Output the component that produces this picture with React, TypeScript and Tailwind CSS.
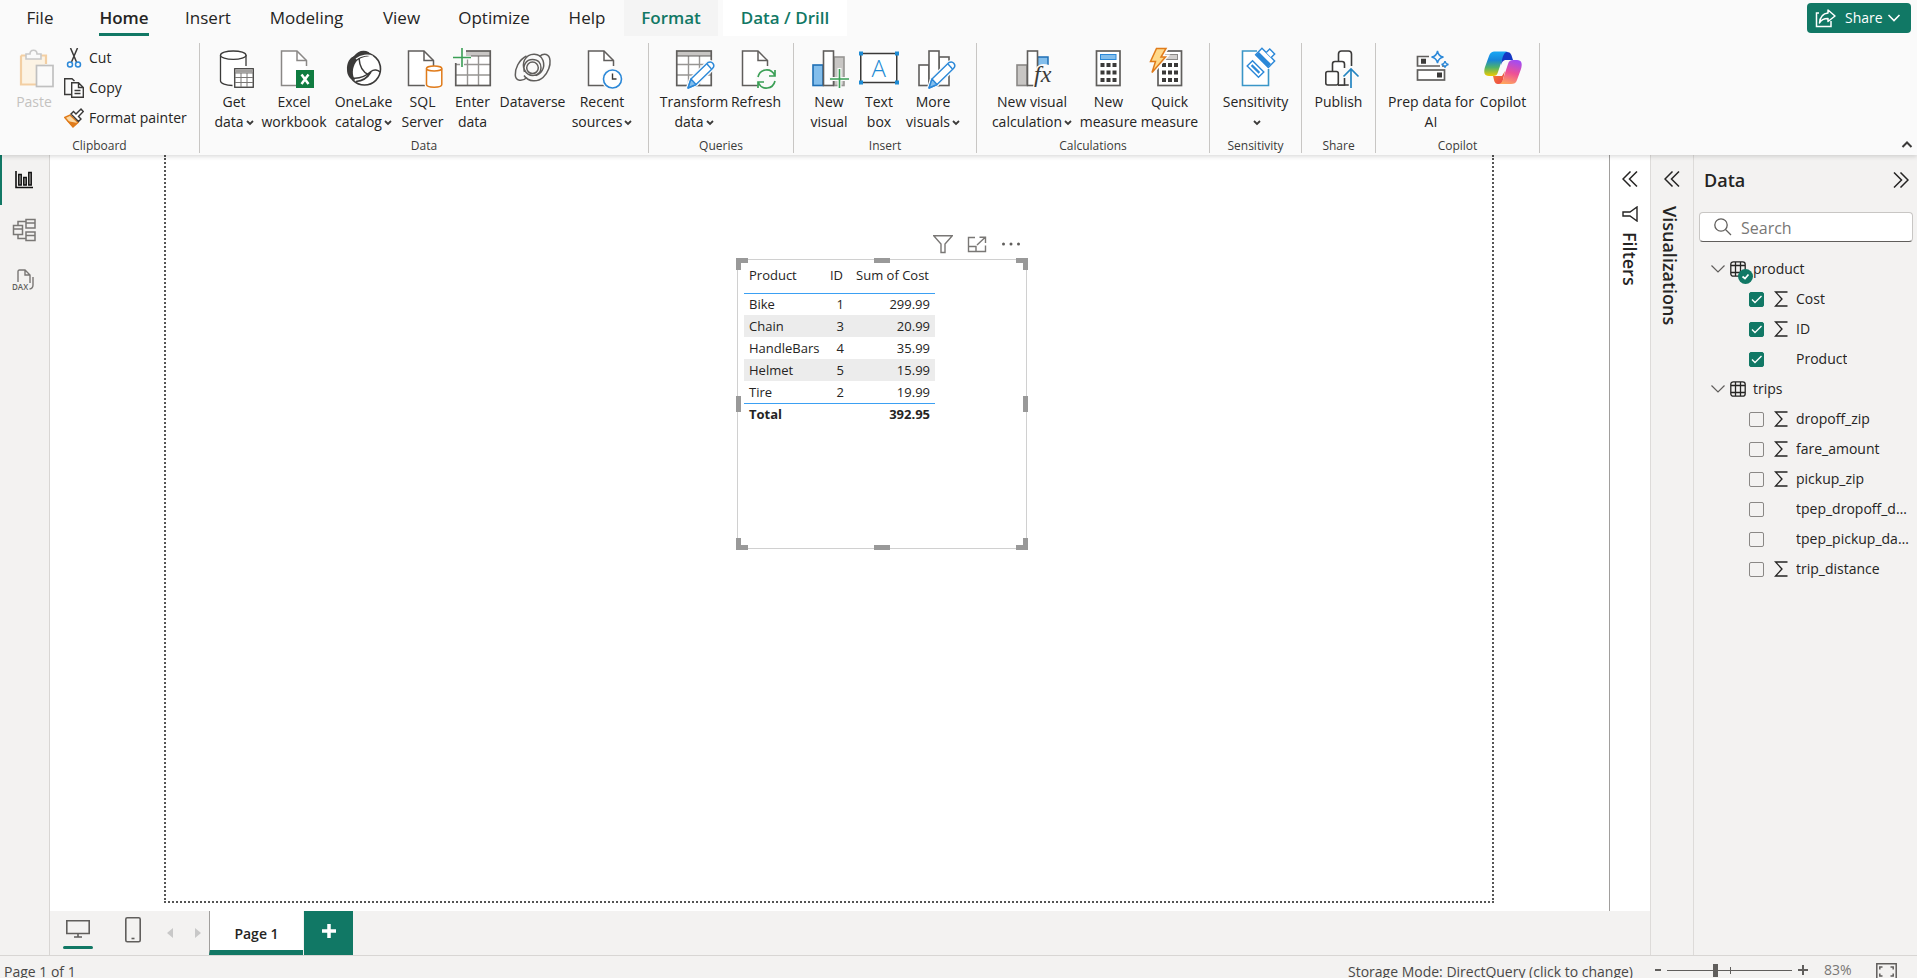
import { useState } from "react";
import type { ReactNode } from "react";

const dark = "#3b3a39";
const grey = "#605e5c";
const blue = "#2b88d8";
const green = "#3a9f55";

function Svg({ children }: { children: ReactNode }) {
  return (
    <svg width="40" height="40" viewBox="0 0 40 40" fill="none" className="overflow-visible shrink-0" aria-hidden="true">
      {children}
    </svg>
  );
}

function Doc({ x, stroke = grey }: { x: number; stroke?: string }) {
  return (
    <g transform={`translate(${x} 0)`} stroke={stroke} strokeWidth="1.5">
      <path d="M25 20V12L16 3H.5V37.5H17" fill="#fff" stroke="none" />
      <path d="M17 37.5H.5V3H16L25.5 12.5V18" />
      <path d="M16 3V12.5H25.5" />
    </g>
  );
}

function Pencil({ x }: { x: number }) {
  return (
    <g transform={`translate(${x} 0)`} stroke={blue} strokeWidth="1.4" strokeLinejoin="round">
      <path d="M0 40L3 31L20 14.5Q23 13 25 15.5T24.500 20.500L8 36.500Z" fill="#fff" stroke="#fafafa" strokeWidth="4" />
      <path d="M0 40L3 31L20 14.5Q23 13 25 15.5T24.500 20.500L8 36.500Z" fill="#fff" />
      <path d="M0 40L3 31L8 36.500Z" fill="#83beec" />
      <path d="M19 16L23.500 21" />
    </g>
  );
}

function GridTable({ x }: { x: number }) {
  return (
    <g transform={`translate(${x} 0)`}>
      <rect x=".75" y="3" width="34.500" height="34.500" fill="#fff" />
      <rect x=".75" y="3" width="34.500" height="5" fill="#c8c6c4" />
      <path d="M12.500 8V37M23.500 8V37M1 16.500H35M1 27H35" stroke="#979593" strokeWidth="1.4" />
      <path d="M1 8H35" stroke={grey} />
      <rect x=".75" y="3" width="34.500" height="34.500" stroke={grey} strokeWidth="1.7" />
    </g>
  );
}

function Bar({ x, y, fill = "#fff", stroke = grey }: { x: number; y: number; fill?: string; stroke?: string }) {
  return <rect x={x} y={y} width="10" height={37.5 - y} fill={fill} stroke={stroke} strokeWidth="1.6" />;
}

function Calculator({ x, screen, line }: { x: number; screen: string; line: string }) {
  return (
    <g transform={`translate(${x} 0)`}>
      <rect x="0" y="3" width="23.500" height="34.500" fill="#fff" stroke={grey} strokeWidth="1.7" />
      <rect x="4" y="6.500" width="15.500" height="5" fill={screen} stroke={line} />
      {[15, 22.5, 30].map((y) => (
        <path key={y} d={`M4 ${y + 2}h4M10 ${y + 2}h4M16 ${y + 2}h4`} stroke={dark} strokeWidth="4" />
      ))}
    </g>
  );
}

const icons = {
  getData: (
    <Svg>
      <path d="M6.500 7V33C6.500 36 12 37.500 19 37.500V20H32V7Z" fill="#fff" />
      <path d="M6.500 7V33C6.500 35.500 12 37.500 18.500 37.500M32 7V18" stroke={dark} strokeWidth="1.3" />
      <ellipse cx="19.250" cy="7.200" rx="12.750" ry="4.200" fill="#fff" stroke={dark} strokeWidth="1.3" />
      <rect x="20.750" y="20.750" width="18.500" height="18.500" fill="#fff" stroke={dark} strokeWidth="1.3" />
      <path d="M21 23H39" stroke="#a19f9d" strokeWidth="3" />
      <path d="M21 25H39M21 29.500H39M21 34.500H39M27 25V39M33 25V39" stroke="#797775" strokeWidth="1" />
    </Svg>
  ),
  excel: (
    <Svg>
      <Doc x={7} stroke="#8a8886" />
      <rect x="22" y="22" width="18" height="18" fill="#107c41" />
      <path d="M27.500 26.500L34.500 36M34.500 26.500L27.500 36" stroke="#fff" strokeWidth="2.500" />
    </Svg>
  ),
  oneLake: (
    <Svg>
      <circle cx="20.500" cy="21" r="16" fill="#fff" stroke={dark} strokeWidth="1.6" />
      <path d="M10 8.500C6 9 2.500 15 3 22C3 27 6 32 11 32C8 27 8 20 12 14C15 10 22 8 28 8C25 1 14 1 10 8.500Z" fill={dark} />
      <path d="M12 11C17 7 24 6 29 8.500" stroke="#fafafa" strokeWidth="1.3" />
      <path d="M15 10C15.500 18 19 24.500 25 27M8 30C16 31 22 28 27 23.500C30 21 34 22 36 24M12 33.500C19 33 24 29 27 24" stroke={dark} strokeWidth="1.5" />
    </Svg>
  ),
  sql: (
    <Svg>
      <Doc x={5} />
      <path d="M23.500 20.500V36.500C23.500 40 38.800 40 38.800 36.500V20.500Z" fill="#fff" stroke="#fafafa" strokeWidth="4" />
      <path d="M23.500 20.500V36.500C23.500 40 38.800 40 38.800 36.500V20.500" fill="#fff" stroke="#e07b1a" strokeWidth="1.5" />
      <ellipse cx="31.150" cy="20.500" rx="7.650" ry="2.500" fill="#fff" stroke="#e07b1a" strokeWidth="1.5" />
    </Svg>
  ),
  enterData: (
    <Svg>
      <GridTable x={2} />
      <path d="M0 0H13V15H0Z" fill="#fafafa" />
      <path d="M9 0V19M0 9.500H18" stroke="#fafafa" strokeWidth="4" />
      <path d="M9 0V19M0 9.500H18" stroke={green} strokeWidth="1.6" />
    </Svg>
  ),
  dataverse: (
    <Svg>
      <g stroke={grey} strokeWidth="1.5">
        <circle cx="19.500" cy="19.800" r="5.800" />
        <path d="M13.500 8C5.500 12 2 21 2.300 27C2.500 33 9 34 14 29.500" />
        <path d="M11.500 24C9.500 17.500 13 11.500 19.500 11.500C25.500 11.500 28 15.500 28 20C28 24 24.500 27.500 20 27.500C12 27.500 8.500 18.500 11.500 12C16 4 27 4.500 30 12.500C32.500 20 28 26 23 27.500" />
        <path d="M11 27.500C15.500 34.500 25 34 30 29.500C35.500 24.500 37.500 17 37 12.500C36.500 6 31 4.500 26.500 8.500" />
      </g>
    </Svg>
  ),
  recent: (
    <Svg>
      <Doc x={6} />
      <circle cx="30.500" cy="31" r="11" fill="#fafafa" />
      <circle cx="30.500" cy="31" r="9" fill="#fff" stroke={blue} strokeWidth="1.6" />
      <path d="M30.500 25.500V31H34.500" stroke={dark} strokeWidth="1.4" />
    </Svg>
  ),
  transform: (
    <Svg>
      <GridTable x={2} />
      <Pencil x={14} />
    </Svg>
  ),
  refresh: (
    <Svg>
      <Doc x={6} />
      <circle cx="30.500" cy="31" r="11" fill="#fafafa" />
      <path d="M22 29C24 20.500 35 19.500 38.500 27M39 22V28H33M39 33C37 41.500 26 42.500 22.500 35M22 40V34H28" stroke={green} strokeWidth="1.7" />
    </Svg>
  ),
  newVisual: (
    <Svg>
      <Bar x={4} y={17} fill="#83beec" stroke="#1f6fb5" />
      <Bar x={25} y={9} fill="#c8c6c4" stroke="#979593" />
      <Bar x={14.5} y={3} />
      <path d="M30.500 20V41M20 31H40" stroke="#fafafa" strokeWidth="4" />
      <path d="M30.500 21V40M21 31H40" stroke={green} strokeWidth="1.6" />
    </Svg>
  ),
  textBox: (
    <Svg>
      <rect x="1.750" y="5.500" width="36" height="29" fill="#fff" stroke={dark} strokeWidth="1.5" />
      <path d="M0 5.500h4M36 5.500h4M0 34.500h4M36 34.500h4" stroke="#1e8bd4" strokeWidth="4" />
      <text x="19.750" y="29" fontSize="24" textAnchor="middle" fill="#1e8bd4" fontFamily="Open Sans, sans-serif" fontWeight="300">A</text>
    </Svg>
  ),
  moreVisuals: (
    <Svg>
      <Bar x={6} y={17} />
      <Bar x={26} y={9} />
      <Bar x={16} y={3} />
      <Pencil x={16} />
    </Svg>
  ),
  visualCalc: (
    <Svg>
      <Bar x={5} y={17} fill="#c8c6c4" stroke="#8a8886" />
      <rect x="25.500" y="9" width="10.500" height="15" fill="#83beec" stroke="#1f6fb5" strokeWidth="1.5" />
      <Bar x={15.5} y={3} />
      <path d="M24 20Q28 14 37 17L40 39H21Z" fill="#fafafa" />
      <text x="22" y="34" fontSize="24" fontStyle="italic" fill={dark} fontFamily="Liberation Serif, serif">fx</text>
    </Svg>
  ),
  measure: (
    <Svg>
      <Calculator x={7.5} screen="#83beec" line={blue} />
    </Svg>
  ),
  quickMeasure: (
    <Svg>
      <Calculator x={8} screen="#d2d0ce" line="#8a8886" />
      <path d="M7 0L17 0L11 8.500H16L2 25L6 14H0Z" fill="#fde07e" stroke="#fafafa" strokeWidth="4" />
      <path d="M6.500 .5H16L11 9H15.500L2 24.500L5.500 13.500H.5Z" fill="#ffd98a" stroke="#e07b1a" strokeWidth="1.5" />
    </Svg>
  ),
  sensitivity: (
    <Svg>
      <path d="M21 3H6.500V37.500H32.500V21" fill="#fff" stroke="#3a96c8" strokeWidth="1.6" />
      <g transform="translate(19.500 21) rotate(45)" stroke={blue} strokeWidth="1.4">
        <rect x="-8" y="-3.800" width="16" height="7.600" fill="#fff" />
        <path d="M-5.500 0H5.500" strokeWidth="2.200" />
      </g>
      <g transform="translate(29.500 9.500) rotate(45)" stroke={blue} strokeWidth="1.4">
        <rect x="-9" y="-4" width="18" height="9" fill="#fff" />
        <path d="M-8.500 3H8.500" strokeWidth="4.500" />
        <path d="M-3 -4V-9H4V-4" fill="#fff" />
      </g>
    </Svg>
  ),
  publish: (
    <Svg>
      <g stroke={dark} strokeWidth="1.6" fill="#fff">
        <path d="M19.500 13V6Q19.500 3 22.500 3H29.500Q32.500 3 32.500 6V18M32 37H19" />
        <path d="M13.500 23V16Q13.500 13.500 16 13.500H23Q25.500 13.500 25.500 16V20M25.500 30V37H19" />
        <rect x="6.800" y="23.500" width="12.500" height="13.500" rx="2" />
      </g>
      <path d="M32 40V21M24.500 28.500L32 21L39.500 28.500" stroke="#fafafa" strokeWidth="4.500" />
      <path d="M32 40V21M24.500 28.500L32 21L39.500 28.500" stroke="#2484c0" strokeWidth="1.7" />
    </Svg>
  ),
  prepData: (
    <Svg>
      <g stroke={grey} strokeWidth="1.7">
        <path d="M18 8.500H6.500V18H29M31 18H33" />
        <rect x="6.500" y="22" width="27" height="10" fill="#fff" />
      </g>
      <path d="M10 13.200H15M26 27H31" stroke={dark} strokeWidth="5" />
      <path d="M26.500 3Q27.500 8.500 32.500 9Q27.500 10 26.500 15Q25.500 10 20.500 9Q25.500 8.500 26.500 3ZM34 13Q34.500 16 37.500 16.500Q34.500 17 34 19.500Q33.500 17 30.500 16.500Q33.500 16 34 13Z" fill="#fafafa" stroke={blue} strokeWidth="1.4" />
    </Svg>
  ),
  copilot: (
    <Svg>
      <defs>
        <linearGradient id="cpLeft" x1="0" y1="0" x2="0" y2="1">
          <stop offset="0" stopColor="#18a8f5" />
          <stop offset=".35" stopColor="#1785d9" />
          <stop offset=".65" stopColor="#4fb26b" />
          <stop offset="1" stopColor="#f0cb00" />
        </linearGradient>
        <linearGradient id="cpRight" x1=".6" y1="0" x2=".3" y2="1">
          <stop offset="0" stopColor="#a44cf0" />
          <stop offset=".5" stopColor="#ee5096" />
          <stop offset="1" stopColor="#ffa65c" />
        </linearGradient>
        <linearGradient id="cpBottom" x1="0" y1="0" x2="1" y2="1">
          <stop offset="0" stopColor="#f7862e" />
          <stop offset="1" stopColor="#e83c4c" />
        </linearGradient>
      </defs>
      <path d="M19 4H24C28 4 28.500 7 30 12H22Q19 13 18 17Z" fill="#1437c4" />
      <path d="M10 28H19L22 23L19 36H15C11 36 11 31 10 28Z" fill="url(#cpBottom)" />
      <path d="M12 3.500H25C21 4 20 8 19 12L15 24C14 27 13 28 10 28H6C1 28 .5 24 2 19L6 8C7.500 4.500 9 3.500 12 3.500Z" fill="url(#cpLeft)" />
      <path d="M28 36H15C19 36 20 32 21 28L25 16C26 13 27 12 30 12H34C39 12 39.500 16 38 21L34 32C33 35 31 36 28 36Z" fill="url(#cpRight)" />
    </Svg>
  ),
};

function Caret() {
  return (
    <svg width="8" height="6" viewBox="0 0 8 6" fill="none" className="inline-block ml-0.5" aria-hidden="true">
      <path d="M1 1l3 3 3-3" stroke={dark} strokeWidth="1.8" />
    </svg>
  );
}

type Command = { icon: keyof typeof icons; lines: string[]; width: string; menu?: boolean };

const groups: { label: string; width: string; pad: string; items: Command[] }[] = [
  {
    label: "Data",
    width: "w-[449px]",
    pad: "pl-[7px]",
    items: [
      { icon: "getData", lines: ["Get", "data"], width: "w-[54px]", menu: true },
      { icon: "excel", lines: ["Excel", "workbook"], width: "w-[66px]" },
      { icon: "oneLake", lines: ["OneLake", "catalog"], width: "w-[73px]", menu: true },
      { icon: "sql", lines: ["SQL", "Server"], width: "w-[45px]" },
      { icon: "enterData", lines: ["Enter", "data"], width: "w-[55px]" },
      { icon: "dataverse", lines: ["Dataverse"], width: "w-[65px]" },
      { icon: "recent", lines: ["Recent", "sources"], width: "w-[74px]", menu: true },
    ],
  },
  {
    label: "Queries",
    width: "w-[145px]",
    pad: "pl-[7px]",
    items: [
      { icon: "transform", lines: ["Transform", "data"], width: "w-[76px]", menu: true },
      { icon: "refresh", lines: ["Refresh"], width: "w-12" },
    ],
  },
  {
    label: "Insert",
    width: "w-[183px]",
    pad: "pl-3",
    items: [
      { icon: "newVisual", lines: ["New", "visual"], width: "w-[46px]" },
      { icon: "textBox", lines: ["Text", "box"], width: "w-[54px]" },
      { icon: "moreVisuals", lines: ["More", "visuals"], width: "w-[54px]", menu: true },
    ],
  },
  {
    label: "Calculations",
    width: "w-[233px]",
    pad: "pl-[9px]",
    items: [
      { icon: "visualCalc", lines: ["New visual", "calculation"], width: "w-[92px]", menu: true },
      { icon: "measure", lines: ["New", "measure"], width: "w-[61px]" },
      { icon: "quickMeasure", lines: ["Quick", "measure"], width: "w-[61px]" },
    ],
  },
  {
    label: "Sensitivity",
    width: "w-[92px]",
    pad: "",
    items: [{ icon: "sensitivity", lines: ["Sensitivity", ""], width: "w-full", menu: true }],
  },
  {
    label: "Share",
    width: "w-[74px]",
    pad: "",
    items: [{ icon: "publish", lines: ["Publish"], width: "w-full" }],
  },
  {
    label: "Copilot",
    width: "w-[164px]",
    pad: "pl-[11px]",
    items: [
      { icon: "prepData", lines: ["Prep data for", "AI"], width: "w-[88px]" },
      { icon: "copilot", lines: ["Copilot"], width: "w-14" },
    ],
  },
];

const tabs = [
  { name: "File", className: "w-20" },
  { name: "Home", className: "w-[88px] font-semibold" },
  { name: "Insert", className: "w-20" },
  { name: "Modeling", className: "w-[117px]" },
  { name: "View", className: "w-[73px]" },
  { name: "Optimize", className: "w-28" },
  { name: "Help", className: "w-[74px]" },
  { name: "Format", className: "w-[94px] bg-[#f4f4f4] text-[#117865] font-semibold" },
  { name: "Data / Drill", className: "w-[124px] ml-[5px] bg-white text-[#117865] font-semibold" },
];

function Header() {
  return (
    <header className="relative z-10 bg-[#fafafa] shadow-[0_1px_5px_rgba(0,0,0,0.18)] shrink-0">
      <div className="flex justify-between">
        <nav className="flex">
          {tabs.map((tab) => (
            <button key={tab.name} className={`h-9 flex flex-col items-center text-[17px] leading-9 whitespace-nowrap ${tab.className}`}>
              <span className={tab.name === "Home" ? "h-9 border-b-[3px] border-[#117865]" : "h-9"}>{tab.name}</span>
            </button>
          ))}
        </nav>
        <button className="flex items-center h-[30px] w-[104px] mt-[3px] mr-1.5 pl-2 rounded bg-[#117865] text-white text-sm">
          <svg width="22" height="20" viewBox="0 0 22 20" fill="none" stroke="#fff" strokeWidth="1.5" aria-hidden="true">
            <path d="M4 5H1.500V18.500H16V13" />
            <path d="M13 2L20 8L13 13.500V10.500C9 10.500 6 12 4.500 15C5 9 8 5.500 13 5Z" strokeLinejoin="round" />
          </svg>
          <span className="ml-2">Share</span>
          <svg width="14" height="8" viewBox="0 0 14 8" fill="none" className="ml-1" aria-hidden="true">
            <path d="M1.500 1L7 6.500L12.500 1" stroke="#fff" strokeWidth="1.6" />
          </svg>
        </button>
      </div>

      <div className="flex h-[119px] text-sm leading-5 text-[#252423]">
        <div className="flex flex-col w-[200px] mt-[7px] mb-0.5 border-r border-[#c8c6c4] shrink-0">
          <div className="flex pl-2.5 h-24 shrink-0">
            <button disabled className="flex flex-col items-center w-12 pt-[5px] text-[#c4c2c0]">
              <svg width="40" height="40" viewBox="0 0 40 40" fill="none" aria-hidden="true">
                <path d="M8 8H31V17H22V36H8Z" fill="#fcf3e4" />
                <path d="M7 7.500V36.500H22M7 7.500H12M27 7.500H32V16" stroke="#f3cfa3" strokeWidth="2.200" />
                <path d="M12 11V6H16C16 1 23 1 23 6H27V11Z" fill="#fafafa" stroke="#c8c8c8" strokeWidth="1.6" />
                <rect x="22.500" y="17.500" width="16.500" height="21" fill="#fafafa" stroke="#c0c0c0" strokeWidth="1.7" />
              </svg>
              <span className="mt-1">Paste</span>
            </button>
            <div className="flex flex-col ml-1.5">
              <button className="flex items-center gap-[5px] h-[30px] whitespace-nowrap">
                <svg width="20" height="20" viewBox="0 0 20 20" fill="none" strokeWidth="1.5" aria-hidden="true">
                  <path d="M6.500 0L12.500 14M13.500 0L7.500 14" stroke={dark} />
                  <circle cx="6" cy="16.500" r="2.500" stroke={blue} />
                  <circle cx="14" cy="16.500" r="2.500" stroke={blue} />
                </svg>
                Cut
              </button>
              <button className="flex items-center gap-[5px] h-[30px] whitespace-nowrap">
                <svg width="20" height="20" viewBox="0 0 20 20" fill="none" stroke={dark} strokeWidth="1.4" aria-hidden="true">
                  <path d="M7 16.500H.7V.7H8L10.500 3" />
                  <path d="M7.700 4.700H14.500L19.300 9.500V19.300H7.700ZM14.500 5V9.500H19M10.500 12.500H16.500M10.500 15.500H16.500" fill="#fff" />
                </svg>
                Copy
              </button>
              <button className="flex items-center gap-[5px] h-[30px] whitespace-nowrap">
                <svg width="20" height="20" viewBox="0 0 20 20" fill="none" strokeWidth="1.4" aria-hidden="true">
                  <path d="M.8 9.500L6 7L14 14.500L9 19Z" fill="#fbd9a5" stroke="#e07b1a" />
                  <path d="M3 13L13.500 15L9 19Z" fill="#e07b1a" />
                  <path d="M7 6L9.500 3.500L12 6L17 1L19.300 3.500L14.500 8.500L17 11L14.500 13.500Z" fill="#fff" stroke={dark} />
                </svg>
                Format painter
              </button>
            </div>
          </div>
          <div className="text-xs leading-[14px] text-center text-[#3b3a39]">Clipboard</div>
        </div>

        {groups.map((group) => (
          <div key={group.label} className={`flex flex-col mt-[7px] mb-0.5 border-r border-[#c8c6c4] shrink-0 ${group.width}`}>
            <div className={`flex h-24 shrink-0 pt-[5px] items-start ${group.pad}`}>
              {group.items.map((item) => (
                <button key={item.icon} className={`flex flex-col items-center shrink-0 whitespace-nowrap ${item.width}`}>
                  {icons[item.icon]}
                  {item.lines.map((line, i) => (
                    <span key={i} className={i === 0 ? "mt-1" : ""}>
                      {line}
                      {item.menu && i === 1 && <Caret />}
                    </span>
                  ))}
                </button>
              ))}
            </div>
            <div className="text-xs leading-[14px] text-center text-[#3b3a39]">{group.label}</div>
          </div>
        ))}
        <button aria-label="Collapse ribbon" className="ml-auto self-end mr-1 mb-1.5">
          <svg width="12" height="9" viewBox="0 0 12 9" fill="none" aria-hidden="true">
            <path d="M1.500 7L6 2.500L10.500 7" stroke={dark} strokeWidth="2" />
          </svg>
        </button>
      </div>
    </header>
  );
}

function ViewRail() {
  return (
    <nav className="w-[50px] shrink-0 bg-[#f3f2f1] border-r border-[#d8d6d4]">
      <button aria-label="Report view" className="flex items-center w-full h-[50px] pl-[13px] border-l-2 border-[#117865]">
        <svg width="18" height="18" viewBox="0 0 18 18" fill="none" aria-hidden="true">
          <path d="M1 0V16.500H18" stroke="#111" strokeWidth="1.600" />
          <path d="M3.700 3.500h2.600v10.500h-2.600zM8.700 6.500h2.600v7.500h-2.600zM13.700 1.500h2.600v12.500h-2.600z" fill="#979593" stroke="#111" strokeWidth="1.300" />
        </svg>
      </button>
      <button aria-label="Model view" className="flex items-center w-full h-[50px] pl-3">
        <svg width="25" height="24" viewBox="0 0 25 24" fill="none" stroke="#797775" strokeWidth="1.500" aria-hidden="true">
          <path d="M1.500 7.500h9v9h-9zM1.500 11h9M14 1.500h9v8.500h-9zM14 5h9M14 14h9v8.500h-9zM14 17.500h9M6 7V3.500H14M6 17V20.500H14" />
        </svg>
      </button>
      <button aria-label="DAX query view" className="flex items-center w-full h-[50px] pl-3">
        <svg width="23" height="22" viewBox="0 0 23 22" fill="none" stroke="#797775" strokeWidth="1.400" aria-hidden="true">
          <path d="M6 13V2.500Q6 1 7.500 1H13L18 6V14M13 1V6H18M21 8V16Q21 19.500 17.500 20" />
          <text x="0" y="20.500" fontSize="8" stroke="none" fill="#605e5c" fontWeight="600" fontFamily="Open Sans, sans-serif">DAX</text>
        </svg>
      </button>
    </nav>
  );
}

const rows = [
  { product: "Bike", id: 1, cost: "299.99" },
  { product: "Chain", id: 3, cost: "20.99" },
  { product: "HandleBars", id: 4, cost: "35.99" },
  { product: "Helmet", id: 5, cost: "15.99" },
  { product: "Tire", id: 2, cost: "19.99" },
];

const corners = [
  "-left-0.5 -top-0.5 border-l-[5px] border-t-[5px]",
  "-right-0.5 -top-0.5 border-r-[5px] border-t-[5px]",
  "-left-0.5 -bottom-0.5 border-l-[5px] border-b-[5px]",
  "-right-0.5 -bottom-0.5 border-r-[5px] border-b-[5px]",
];

const edges = [
  "left-1/2 -ml-2 -top-0.5 w-4 h-[5px]",
  "left-1/2 -ml-2 -bottom-0.5 w-4 h-[5px]",
  "top-1/2 -mt-2 -left-0.5 w-[5px] h-4",
  "top-1/2 -mt-2 -right-0.5 w-[5px] h-4",
];

function TableVisual() {
  return (
    <div className="absolute left-[571px] top-[104px] w-[290px] h-[290px] border border-[#d0d0d0]">
      <div className="absolute right-[5px] bottom-full flex items-center gap-3.5 mb-1.5">
        <button aria-label="Filters on visual" className="flex">
          <svg width="20" height="20" viewBox="0 0 20 20" fill="none" stroke="#797775" strokeWidth="1.400" aria-hidden="true">
            <path d="M.7 1.700H19.300L12 10V18.500H8V10Z" />
          </svg>
        </button>
        <button aria-label="Focus mode" className="flex">
          <svg width="20" height="20" viewBox="0 0 20 20" fill="none" stroke="#797775" strokeWidth="1.400" aria-hidden="true">
            <path d="M8 3.500H1.500V17.500H18.500V11.500M1.500 12.500H9V17.500M10 11L18 3.500M12.500 3.200H18.500V9" />
          </svg>
        </button>
        <button aria-label="More options" className="flex">
          <svg width="20" height="20" viewBox="0 0 20 20" fill="#605e5c" aria-hidden="true">
            <circle cx="2.500" cy="10" r="1.500" />
            <circle cx="10" cy="10" r="1.500" />
            <circle cx="17.500" cy="10" r="1.500" />
          </svg>
        </button>
      </div>

      {corners.map((c) => (
        <span key={c} className={`absolute w-3 h-3 border-[#999] ${c}`} />
      ))}
      {edges.map((c) => (
        <span key={c} className={`absolute bg-[#999] ${c}`} />
      ))}

      <table className="mt-[5px] ml-1.5 w-[191px] table-fixed border-collapse text-[13px] leading-5 text-[#252423] whitespace-nowrap">
        <colgroup>
          <col className="w-20" />
          <col className="w-[25px]" />
          <col />
        </colgroup>
        <thead>
          <tr className="h-7 border-b border-[#3ba0f3] align-top">
            <th scope="col" className="font-normal text-left pl-[5px]">Product</th>
            <th scope="col" className="font-normal text-center">ID</th>
            <th scope="col" className="font-normal text-right pr-1.5">Sum of Cost</th>
          </tr>
        </thead>
        <tbody>
          {rows.map((row, i) => (
            <tr key={row.product} className={i % 2 ? "h-[22px] bg-[#ececec]" : "h-[22px]"}>
              <td className="pl-[5px]">{row.product}</td>
              <td className="text-right pr-[5px]">{row.id}</td>
              <td className="text-right pr-[5px]">{row.cost}</td>
            </tr>
          ))}
        </tbody>
        <tfoot>
          <tr className="h-[22px] border-t border-[#3ba0f3] font-bold">
            <td className="pl-[5px]">Total</td>
            <td />
            <td className="text-right pr-[5px]">392.95</td>
          </tr>
        </tfoot>
      </table>
    </div>
  );
}

function DoubleChevron({ right }: { right?: boolean }) {
  return (
    <svg width="16" height="16" viewBox="0 0 16 16" fill="none" stroke="#252423" strokeWidth="1.500" aria-hidden="true">
      <path d={right ? "M1 .5L8.500 8L1 15.500M7.500 .5L15 8L7.500 15.500" : "M8.500 .5L1 8L8.500 15.500M15 .5L7.500 8L15 15.500"} />
    </svg>
  );
}

function PageBar() {
  return (
    <div className="flex h-11 shrink-0 bg-[#f3f2f1]">
      <button aria-label="Desktop layout" className="flex flex-col items-center w-[30px] ml-[13px] mt-[9px]">
        <svg width="24" height="18" viewBox="0 0 24 18" fill="none" stroke={grey} strokeWidth="1.600" aria-hidden="true">
          <path d="M.8 .8H23.200V13.500H.8ZM12 13.500V17M8 17H16" />
        </svg>
        <span className="w-full h-[3px] mt-2 rounded-full bg-[#117865]" />
      </button>
      <button aria-label="Mobile layout" className="ml-8 mb-[7px]">
        <svg width="16" height="26" viewBox="0 0 16 26" fill="none" stroke={grey} strokeWidth="1.600" aria-hidden="true">
          <rect x=".8" y=".8" width="14.400" height="24" rx="1.500" />
          <path d="M6.500 21.500H9.500" />
        </svg>
      </button>
      <button disabled aria-label="Previous page" className="ml-[26px]">
        <svg width="6" height="12" viewBox="0 0 6 12" fill="#c8c8c8" aria-hidden="true">
          <path d="M6 1V11L0 6Z" />
        </svg>
      </button>
      <button disabled aria-label="Next page" className="ml-[22px]">
        <svg width="6" height="12" viewBox="0 0 6 12" fill="#c8c8c8" aria-hidden="true">
          <path d="M0 1V11L6 6Z" />
        </svg>
      </button>
      <button className="ml-2 w-[94px] pt-1.5 bg-white border-l border-l-[#a19f9d] border-b-[5px] border-b-[#117865] text-sm font-semibold text-[#252423]">
        Page 1
      </button>
      <button aria-label="New page" className="flex items-center justify-center w-[49px] ml-px pb-1 bg-[#117865]">
        <svg width="14" height="14" viewBox="0 0 14 14" fill="none" stroke="#fff" strokeWidth="3.500" aria-hidden="true">
          <path d="M7 0V14M0 7H14" />
        </svg>
      </button>
    </div>
  );
}

function TableIcon({ used }: { used: boolean }) {
  return (
    <span className="relative">
      <svg width="16" height="16" viewBox="0 0 16 16" fill="none" stroke="#252423" strokeWidth="1.300" aria-hidden="true">
        <rect x=".8" y=".8" width="14.400" height="14.400" rx="2.500" />
        <path d="M5.500 1V15M10.500 1V15M1 4.500H15M1 11.500H15" />
      </svg>
      {used && (
        <svg width="15" height="15" viewBox="0 0 15 15" fill="none" className="absolute left-2 top-2" aria-hidden="true">
          <circle cx="7.500" cy="7.500" r="7.500" fill="#117865" />
          <path d="M4.500 7.500L7 9.500L10.500 5.500" stroke="#fff" strokeWidth="1.700" />
        </svg>
      )}
    </span>
  );
}

const tables = [
  {
    name: "product",
    used: true,
    fields: [
      { name: "Cost", sum: true, checked: true },
      { name: "ID", sum: true, checked: true },
      { name: "Product", sum: false, checked: true },
    ],
  },
  {
    name: "trips",
    used: false,
    fields: [
      { name: "dropoff_zip", sum: true, checked: false },
      { name: "fare_amount", sum: true, checked: false },
      { name: "pickup_zip", sum: true, checked: false },
      { name: "tpep_dropoff_datetime", sum: false, checked: false },
      { name: "tpep_pickup_datetime", sum: false, checked: false },
      { name: "trip_distance", sum: true, checked: false },
    ],
  },
];

function DataPane() {
  return (
    <aside className="w-[223px] shrink-0 bg-[#f3f2f1] text-[#252423]">
      <div className="flex items-center justify-between h-[57px] pl-2.5 pr-2 pb-2">
        <h2 className="text-lg font-semibold">Data</h2>
        <button aria-label="Collapse data pane">
          <DoubleChevron right />
        </button>
      </div>
      <div className="flex items-center h-[30px] ml-[5px] mr-1 pl-3.5 rounded bg-white border border-[#c8c6c4] border-b-[#605e5c]">
        <svg width="18" height="18" viewBox="0 0 18 18" fill="none" stroke={grey} strokeWidth="1.300" className="shrink-0" aria-hidden="true">
          <circle cx="7" cy="7" r="6.200" />
          <path d="M11.500 11.500L17 17" />
        </svg>
        <input aria-label="Search" placeholder="Search" className="ml-[9px] pt-0.5 w-full min-w-0 text-base outline-none placeholder:text-[#797775]" />
      </div>
      <div className="mt-3 text-sm">
        {tables.map((table) => (
          <div key={table.name}>
            <button className="flex items-center w-full h-[30px] pl-[17px]">
              <svg width="14" height="8" viewBox="0 0 14 8" fill="none" stroke={grey} strokeWidth="1.200" aria-hidden="true">
                <path d="M.5 .5L7 7L13.500 .5" />
              </svg>
              <span className="flex ml-[5px]"><TableIcon used={table.used} /></span>
              <span className="ml-[7px]">{table.name}</span>
            </button>
            {table.fields.map((field) => (
              <label key={field.name} className="flex items-center h-[30px] pl-[55px] pr-1.5">
                <span className="relative flex shrink-0">
                  <input
                    type="checkbox"
                    defaultChecked={field.checked}
                    className="peer appearance-none w-[15px] h-[15px] rounded-xs border border-[#8a8886] checked:bg-[#117865] checked:border-[#117865]"
                  />
                  <svg width="15" height="15" viewBox="0 0 15 15" fill="none" className="absolute inset-0 hidden peer-checked:block pointer-events-none" aria-hidden="true">
                    <path d="M3 7.500L6 10.500L12.500 4" stroke="#fff" strokeWidth="1.400" />
                  </svg>
                </span>
                <span className="w-8 pl-2.5 shrink-0">
                  {field.sum && (
                    <svg width="14" height="16" viewBox="0 0 14 16" fill="none" stroke="#252423" strokeWidth="1.300" aria-hidden="true">
                      <path d="M13.500 1H1.500L8 8L1.500 15H13.500" />
                    </svg>
                  )}
                </span>
                <span className="truncate">{field.name}</span>
              </label>
            ))}
          </div>
        ))}
      </div>
    </aside>
  );
}

function StatusBar() {
  const [zoom, setZoom] = useState(83);

  return (
    <footer className="flex items-start h-[23px] shrink-0 overflow-hidden bg-[#f3f2f1] border-t border-[#d8d6d4] text-sm text-[#494847] whitespace-nowrap">
      <span className="mt-1.5 ml-1">Page 1 of 1</span>
      <button className="mt-1.5 ml-auto">Storage Mode: DirectQuery (click to change)</button>
      <button aria-label="Zoom out" className="flex items-center h-7 ml-[22px]">
        <svg width="6" height="12" viewBox="0 0 6 12" aria-hidden="true">
          <path d="M0 6H6" stroke={grey} strokeWidth="2" />
        </svg>
      </button>
      <div className="relative flex items-center h-7 w-[125px] ml-1.5">
        <input
          type="range"
          aria-label="Zoom level"
          min={10}
          max={200}
          value={zoom}
          onChange={(e) => setZoom(Number(e.target.value))}
          className="w-full h-px appearance-none bg-[#605e5c] [&::-webkit-slider-thumb]:appearance-none [&::-webkit-slider-thumb]:w-[5px] [&::-webkit-slider-thumb]:h-[13px] [&::-webkit-slider-thumb]:bg-[#605e5c]"
        />
        <span className="absolute left-1/2 top-[11px] w-px h-[7px] bg-[#605e5c]" />
      </div>
      <button aria-label="Zoom in" className="flex items-center h-7 ml-1.5">
        <svg width="10" height="10" viewBox="0 0 10 10" aria-hidden="true">
          <path d="M0 5H10M5 0V10" stroke={grey} strokeWidth="2" />
        </svg>
      </button>
      <span className="w-[52px] h-7 ml-4 leading-7 text-[#797775]">{zoom}%</span>
      <button aria-label="Fit to page" className="mt-[7px] mr-5">
        <svg width="21" height="17" viewBox="0 0 21 17" fill="none" stroke={grey} strokeWidth="1.500" aria-hidden="true">
          <path d="M.8 .8H20.200V16.200H.8ZM6.500 4H3.800V6.500M14.500 4H17.200V6.500M6.500 13H3.800V10.500M14.500 13H17.200V10.500" />
        </svg>
      </button>
    </footer>
  );
}

export default function App() {
  return (
    <div className="flex flex-col h-screen overflow-hidden bg-white text-[#252423] font-['Open_Sans','Noto_Sans',sans-serif]">
      <Header />
      <div className="flex flex-1 min-h-0">
        <ViewRail />
        <div className="flex flex-col flex-1 min-w-0">
          <div className="flex flex-1 min-h-0">
            <main className="flex flex-1 min-w-0 pl-[114px] pr-[115px] pb-2 bg-white">
              <div className="relative flex-1 border-2 border-t-0 border-dotted border-[#555]">
                <TableVisual />
              </div>
            </main>
            <aside className="flex flex-col items-center w-[41px] shrink-0 pt-4 border-l border-[#a19f9d] bg-white">
              <button aria-label="Expand filters pane">
                <DoubleChevron />
              </button>
              <div className="flex items-center gap-2.5 mt-[19px] [writing-mode:vertical-rl]">
                <svg width="16" height="16" viewBox="0 0 16 16" fill="none" stroke="#252423" strokeWidth="1.400" aria-hidden="true">
                  <path d="M15 1V15L8 10H1V6H8Z" />
                </svg>
                <h2 className="text-lg leading-6 font-semibold">Filters</h2>
              </div>
            </aside>
          </div>
          <PageBar />
        </div>
        <aside className="flex flex-col items-center w-[44px] shrink-0 pt-4 border-x border-[#dddbd9] bg-[#f3f2f1]">
          <button aria-label="Expand visualizations pane">
            <DoubleChevron />
          </button>
          <h2 className="mt-[19px] mr-1 text-lg leading-6 font-semibold [writing-mode:vertical-rl]">Visualizations</h2>
        </aside>
        <DataPane />
      </div>
      <StatusBar />
    </div>
  );
}
